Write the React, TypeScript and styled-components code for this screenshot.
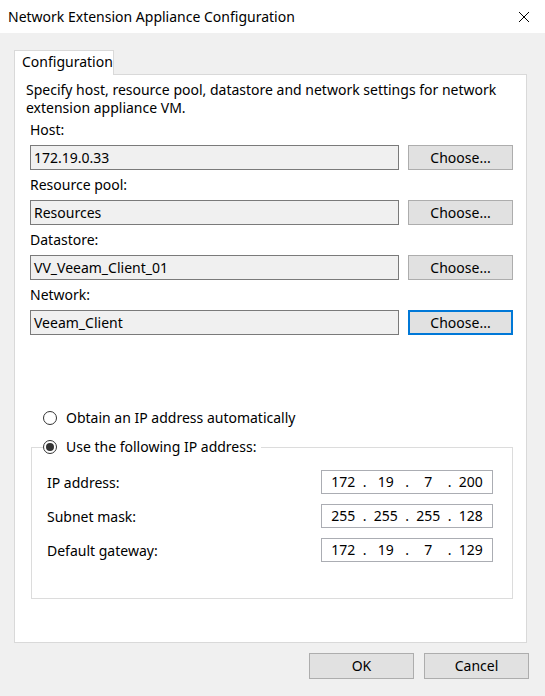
import React from "react";
import styled, { createGlobalStyle } from "styled-components";

const Global = createGlobalStyle`
  html, body { margin: 0; padding: 0; }
  body {
    background: #f0f0f0;
    font-family: "Noto Sans", "Open Sans", sans-serif;
    font-size: 14px;
    color: #000;
  }
`;

const Window = styled.div`
  width: 545px;
  height: 696px;
  display: flex;
  flex-direction: column;
  background: #f0f0f0;
  overflow: hidden;
`;

const TitleBar = styled.div`
  height: 33px;
  background: #fff;
  display: flex;
  align-items: center;
  justify-content: space-between;
  padding: 0 15px 0 8px;
  box-sizing: border-box;
  flex: none;
`;

const Title = styled.span`
  line-height: 20px;
`;

const CloseIcon = styled.svg`
  width: 12px;
  height: 12px;
  display: block;
`;

const Body = styled.div`
  flex: 1;
  display: flex;
  flex-direction: column;
  padding: 17px 18px 0 14px;
`;

const TabStrip = styled.div`
  display: flex;
  height: 24px;
`;

const Tab = styled.div`
  width: 100px;
  box-sizing: border-box;
  border: 1px solid #d9d9d9;
  border-bottom: none;
  background: #fff;
  padding-left: 7px;
  line-height: 22px;
  position: relative;
  z-index: 1;
  margin-bottom: -1px;
`;

const TabPanel = styled.div`
  height: 569px;
  box-sizing: border-box;
  background: #fff;
  border: 1px solid #d9d9d9;
  padding: 6px 13px 0 11px;
  display: flex;
  flex-direction: column;
`;

const Description = styled.p`
  margin: 0 0 3px 0;
  line-height: 18px;
`;

const FieldGroup = styled.div`
  display: flex;
  flex-direction: column;
  padding-left: 4px;
`;

const FieldLabel = styled.div`
  line-height: 20px;
  height: 20px;
  margin-bottom: 5px;
`;

const FieldRow = styled.div`
  display: flex;
  gap: 9px;
  margin-bottom: 5px;
`;

const ReadOnlyInput = styled.div`
  flex: 1;
  height: 25px;
  box-sizing: border-box;
  background: #f0f0f0;
  border: 1px solid #7a7a7a;
  padding-left: 3px;
  line-height: 23px;
`;

const Button = styled.button<{ $focused?: boolean; $width?: number }>`
  width: ${(p) => p.$width ?? 105}px;
  height: ${(p) => (p.$width ? 26 : 25)}px;
  box-sizing: border-box;
  background: #e1e1e1;
  border: ${(p) => (p.$focused ? "2px solid #0078d7" : "1px solid #adadad")};
  font: inherit;
  color: #000;
  padding: 0;
  line-height: 20px;
  cursor: default;
`;

const RadioRow = styled.label`
  display: flex;
  align-items: center;
  gap: 9px;
  line-height: 20px;
  background: #fff;
`;

const RadioCircle = styled.span<{ $checked?: boolean }>`
  width: 14px;
  height: 14px;
  box-sizing: border-box;
  border: 1px solid #333;
  border-radius: 50%;
  background: #fff;
  display: flex;
  align-items: center;
  justify-content: center;
  &::after {
    content: "";
    width: 8px;
    height: 8px;
    border-radius: 50%;
    background: #333;
    display: ${(p) => (p.$checked ? "block" : "none")};
  }
`;

const AutoRadio = styled.div`
  margin-top: 68px;
  padding-left: 17px;
`;

const GroupBox = styled.fieldset`
  margin: 9px 0 0 5px;
  padding: 13px 19px 30px 15px;
  border: 1px solid #dcdcdc;
  height: 162px;
  box-sizing: border-box;
  display: flex;
  flex-direction: column;
  gap: 10px;
  min-width: 0;
  position: relative;
`;

const Legend = styled.legend`
  padding: 0 5px 0 0;
  margin-left: -4px;
`;

const IpRow = styled.div`
  display: flex;
  align-items: center;
  justify-content: space-between;
`;

const IpInput = styled.div`
  width: 172px;
  height: 24px;
  box-sizing: border-box;
  border: 1px solid #abadb3;
  background: #fff;
  display: grid;
  grid-template-columns: repeat(4, 1fr);
  line-height: 22px;
`;

const Octet = styled.span<{ $last?: boolean }>`
  text-align: center;
  position: relative;
  ${(p) =>
    p.$last
      ? ""
      : `&::after {
    content: ".";
    position: absolute;
    right: -2px;
  }`}
`;

const Footer = styled.div`
  display: flex;
  justify-content: flex-end;
  gap: 10px;
  padding: 10px 0 0 0;
  margin-right: -2px;
`;

const fields = [
  { label: "Host:", value: "172.19.0.33" },
  { label: "Resource pool:", value: "Resources" },
  { label: "Datastore:", value: "VV_Veeam_Client_01" },
  { label: "Network:", value: "Veeam_Client", focused: true },
];

const ips = [
  { label: "IP address:", value: ["172", "19", "7", "200"] },
  { label: "Subnet mask:", value: ["255", "255", "255", "128"] },
  { label: "Default gateway:", value: ["172", "19", "7", "129"] },
];

export default function App() {
  return (
    <>
      <Global />
      <Window>
        <TitleBar>
          <Title>Network Extension Appliance Configuration</Title>
          <CloseIcon viewBox="0 0 12 12">
            <path d="M1 1 L11 11 M11 1 L1 11" stroke="#000" strokeWidth="1" fill="none" />
          </CloseIcon>
        </TitleBar>
        <Body>
          <TabStrip>
            <Tab>Configuration</Tab>
          </TabStrip>
          <TabPanel>
            <Description>
              Specify host, resource pool, datastore and network settings for network
              extension appliance VM.
            </Description>
            <FieldGroup>
              {fields.map((f) => (
                <React.Fragment key={f.label}>
                  <FieldLabel>{f.label}</FieldLabel>
                  <FieldRow>
                    <ReadOnlyInput>{f.value}</ReadOnlyInput>
                    <Button $focused={f.focused}>Choose...</Button>
                  </FieldRow>
                </React.Fragment>
              ))}
            </FieldGroup>
            <AutoRadio>
              <RadioRow>
                <RadioCircle />
                Obtain an IP address automatically
              </RadioRow>
            </AutoRadio>
            <GroupBox>
              <Legend>
                <RadioRow>
                  <RadioCircle $checked />
                  Use the following IP address:
                </RadioRow>
              </Legend>
              {ips.map((ip) => (
                <IpRow key={ip.label}>
                  <span>{ip.label}</span>
                  <IpInput>
                    {ip.value.map((o, i) => (
                      <Octet key={i} $last={i === 3}>
                        {o}
                      </Octet>
                    ))}
                  </IpInput>
                </IpRow>
              ))}
            </GroupBox>
          </TabPanel>
          <Footer>
            <Button $width={105}>OK</Button>
            <Button $width={105}>Cancel</Button>
          </Footer>
        </Body>
      </Window>
    </>
  );
}
